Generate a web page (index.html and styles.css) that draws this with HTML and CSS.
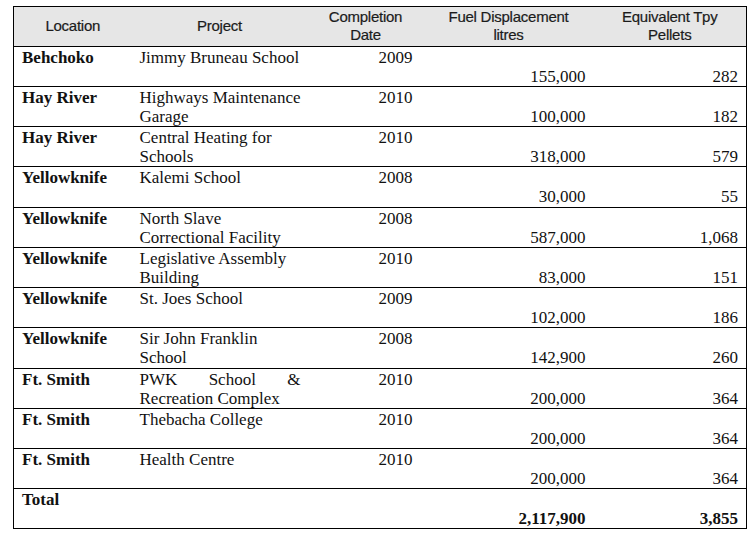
FILE: index.html
```html
<!DOCTYPE html>
<html>
<head>
<meta charset="utf-8">
<link rel="stylesheet" href="styles.css">
</head>
<body>
<table class="grid">
  <colgroup>
    <col class="c-loc">
    <col class="c-proj">
    <col class="c-date">
    <col class="c-fuel">
    <col class="c-pel">
  </colgroup>
  <thead>
    <tr class="head">
      <th>Location</th>
      <th>Project</th>
      <th>Completion<br>Date</th>
      <th>Fuel Displacement<br>litres</th>
      <th>Equivalent Tpy<br>Pellets</th>
    </tr>
  </thead>
  <tbody>
    <tr><td class="loc">Behchoko</td><td class="proj">Jimmy Bruneau School</td><td class="date">2009</td><td class="num">155,000</td><td class="num">282</td></tr>
    <tr><td class="loc">Hay River</td><td class="proj">Highways Maintenance<br>Garage</td><td class="date">2010</td><td class="num">100,000</td><td class="num">182</td></tr>
    <tr><td class="loc">Hay River</td><td class="proj">Central Heating for<br>Schools</td><td class="date">2010</td><td class="num">318,000</td><td class="num">579</td></tr>
    <tr class="tall"><td class="loc">Yellowknife</td><td class="proj">Kalemi School</td><td class="date">2008</td><td class="num">30,000</td><td class="num">55</td></tr>
    <tr><td class="loc">Yellowknife</td><td class="proj">North Slave<br>Correctional Facility</td><td class="date">2008</td><td class="num">587,000</td><td class="num">1,068</td></tr>
    <tr><td class="loc">Yellowknife</td><td class="proj">Legislative Assembly<br>Building</td><td class="date">2010</td><td class="num">83,000</td><td class="num">151</td></tr>
    <tr><td class="loc">Yellowknife</td><td class="proj">St. Joes School</td><td class="date">2009</td><td class="num">102,000</td><td class="num">186</td></tr>
    <tr class="tall"><td class="loc">Yellowknife</td><td class="proj">Sir John Franklin<br>School</td><td class="date">2008</td><td class="num">142,900</td><td class="num">260</td></tr>
    <tr><td class="loc">Ft. Smith</td><td class="proj"><span class="just">PWK School &amp;</span>Recreation Complex</td><td class="date">2010</td><td class="num">200,000</td><td class="num">364</td></tr>
    <tr><td class="loc">Ft. Smith</td><td class="proj">Thebacha College</td><td class="date">2010</td><td class="num">200,000</td><td class="num">364</td></tr>
    <tr><td class="loc">Ft. Smith</td><td class="proj">Health Centre</td><td class="date">2010</td><td class="num">200,000</td><td class="num">364</td></tr>
    <tr class="total"><td class="loc">Total</td><td class="proj"></td><td class="date"></td><td class="num">2,117,900</td><td class="num">3,855</td></tr>
  </tbody>
</table>
</body>
</html>
```

FILE: styles.css
```css
html, body {
  margin: 0;
  padding: 0;
  background: #ffffff;
}

.grid {
  margin: 6px 0 0 13px;
  width: 733px;
  table-layout: fixed;
  border-collapse: collapse;
  font-family: "Liberation Serif", "Times New Roman", serif;
  font-size: 17px;
  line-height: 19px;
  color: #111111;
  border: 1px solid #000000;
}

.c-loc { width: 118px; }
.c-proj { width: 176px; }
.c-date { width: 116px; }
.c-fuel { width: 170px; }
.c-pel { width: 153px; }

.head {
  height: 40px;
  background: #e6e6e6;
}

.head th {
  font-family: "Liberation Sans", Arial, sans-serif;
  font-weight: normal;
  font-size: 15px;
  letter-spacing: -0.25px;
  line-height: 18px;
  color: #1b1b1b;
  text-align: center;
  vertical-align: middle;
  padding: 0 4px 2px 4px;
  border-bottom: 1px solid #000000;
  -webkit-text-stroke: 0.2px #1b1b1b;
}

tbody tr {
  height: 40px;
}

tbody tr.tall {
  height: 41px;
}

tbody td {
  border-top: 1px solid #000000;
  padding: 1px 8px 0 8px;
  vertical-align: top;
  white-space: nowrap;
}

.loc {
  font-weight: bold;
}

.date {
  text-align: right;
  padding-right: 11px;
}

.num {
  text-align: right;
  padding-top: 20px;
}

.total .num {
  font-weight: bold;
}

.just {
  display: block;
  width: 161px;
  text-align: justify;
  text-align-last: justify;
}
```
